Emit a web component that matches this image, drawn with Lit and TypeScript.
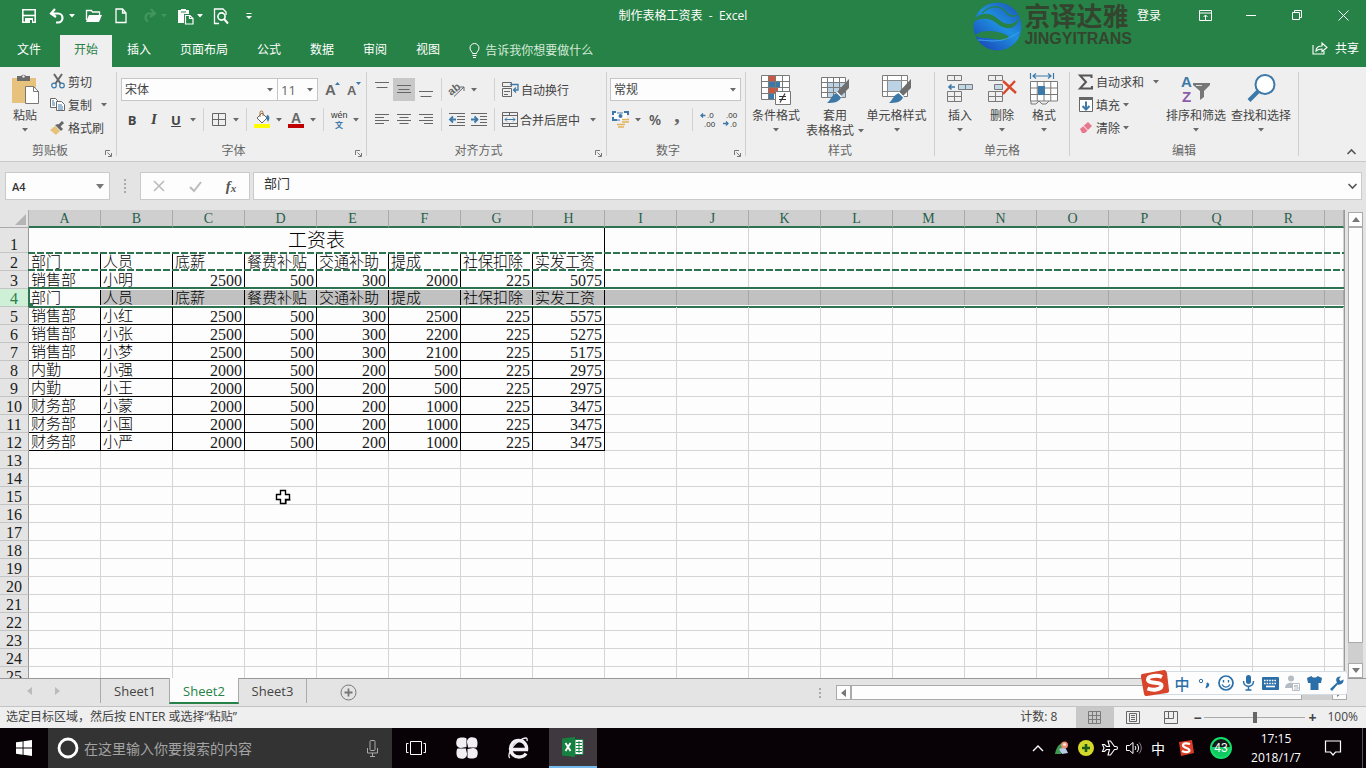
import { LitElement, html, svg, css, nothing, TemplateResult, SVGTemplateResult } from "lit";
import { customElement, state } from "lit/decorators.js";
import { classMap } from "lit/directives/class-map.js";

const icon = (w: number, h: number, body: SVGTemplateResult) =>
  html`<svg class="ic" width=${w} height=${h} viewBox="0 0 ${w} ${h}" fill="none" aria-hidden="true">${body}</svg>`;

const caret = html`<svg class="caret" width="6" height="4" viewBox="0 0 6 4" aria-hidden="true"><path d="M0 0h6L3 3.5z" fill="currentColor"/></svg>`;

const G = "#666";
const B = "#3c78a8";

const cellsGrid = (x: number, y: number, c: number, r: number, w: number, h: number) => {
  const lines: string[] = [];
  for (let i = 0; i <= c; i++) lines.push(`M${x + i * w} ${y}v${r * h}`);
  for (let j = 0; j <= r; j++) lines.push(`M${x} ${y + j * h}h${c * w}`);
  return svg`<path d=${lines.join("")} stroke="#7a7a7a"/>`;
};

const brush = svg`<path d="M29 6v9l-8 8-4-4z" fill="#6e6e6e"/><path d="M17 20l4 4c-1 5-7 6-14 6 4-3 4-8 10-10z" fill=${B}/><path d="M16.500 19l5 5" stroke="#fff" stroke-width="1.300"/>`;

const I = {
  save: icon(16, 16, svg`<path d="M1.800 1.800h12.400v12.400H1.800z" stroke="#fff" stroke-width="1.600"/><path d="M1 7.500h14" stroke="#fff" stroke-width="1.600"/><path d="M4 10h8v5H4z" fill="#fff"/><path d="M9 12h2v3H9z" fill="#268246"/>`),
  undo: icon(16, 16, svg`<path d="M6 1L2 5.5 7 9M2.5 5.5H9a4.5 4.5 0 010 9H7" stroke="#fff" stroke-width="2.2"/>`),
  redo: icon(16, 16, svg`<path d="M10 1l4 4.500L9 9M13.500 5.500H7a4.500 4.500 0 000 8" stroke="#439560" stroke-width="2.200"/>`),
  open: icon(17, 16, svg`<path d="M1.500 12V2.500h5l1 1.500h7v3" stroke="#fff" stroke-width="1.300"/><path d="M4 7h13l-3 7H1z" fill="#fff"/>`),
  fresh: icon(12, 16, svg`<path d="M1 1h6.500L11 5v9.500H1z M7.500 1v4H11" stroke="#fff" stroke-width="1.300"/>`),
  pasteW: icon(17, 17, svg`<path d="M1 2h3v-1h5v1h3v4H7v9H1z" fill="#fff"/><path d="M4 4h5" stroke="#268246"/><path d="M8.500 7.500h4.500l3 3v5.500H8.500z M12.500 7.500v3H16" fill="#268246" stroke="#fff" stroke-width="1.200"/>`),
  preview: icon(16, 17, svg`<path d="M13 7V4L10 1H1.500v14.500H6" stroke="#fff" stroke-width="1.300"/><circle cx="8.500" cy="8.500" r="3.600" stroke="#fff" stroke-width="1.600"/><path d="M11 11l4 4.500" stroke="#fff" stroke-width="2"/>`),
  more: icon(8, 8, svg`<path d="M1.500 1.500h5" stroke="#fff"/><path d="M1 4h6L4 7z" fill="#fff"/>`),
  ribbonOpt: icon(13, 11, svg`<path d="M.5 .5h12v10H.5zM.5 3h12M6.500 10V5M4.500 7l2-2 2 2" stroke="#fff"/>`),
  min: icon(10, 10, svg`<path d="M0 5.500h10" stroke="#fff"/>`),
  restore: icon(10, 10, svg`<path d="M.5 2.500h7v7h-7zM2.500 2.500v-2h7v7h-2" stroke="#fff"/>`),
  close: icon(11, 11, svg`<path d="M.5 .5l10 10M10.500 .5l-10 10" stroke="#fff"/>`),
  bulb: icon(11, 15, svg`<path d="M3.500 10.500C3.500 8.500 1 8 1 5a4.500 4.500 0 019 0c0 3-2.500 3.500-2.500 5.500zM3.500 12.500h4M4 14.500h3" stroke="#fff"/>`),
  share: icon(16, 14, svg`<path d="M1 4v9h11v-3M4 10c0-4 3-5 6-5V2l5 4.500-5 4V8C7 8 5.500 8.500 4 10z" stroke="#fff" stroke-width="1.100"/>`),
  paste: icon(30, 32, svg`<path d="M2 5h24v25H2z" fill="#e6c27c"/><path d="M7 3h4a3 3 0 015 0h4v5H7z" fill="#6b6b6b"/><circle cx="13.500" cy="3.500" r="1.200" fill="#eee"/><path d="M15.500 13.500h8l5 5v12h-13z" fill="#fff" stroke="#777"/><path d="M23.500 13.500v5h5" stroke="#777"/>`),
  cut: icon(14, 15, svg`<path d="M3 0l6.500 9.500M11 0L4.500 9.500" stroke="#666" stroke-width="2"/><circle cx="3" cy="11.500" r="2.300" stroke=${B} stroke-width="1.200"/><circle cx="11" cy="11.500" r="2.300" stroke=${B} stroke-width="1.200"/>`),
  copy: icon(15, 15, svg`<path d="M.5 1.500h5l2 2v7h-7z" fill="#fff" stroke=${G}/><path d="M6.500 4.500h5l3 3v6h-8z" fill="#fff" stroke=${G}/><path d="M2 4h2M2 6h3M2 8h3M8 8h4M8 10h5M8 12h5" stroke=${B}/>`),
  painter: icon(15, 14, svg`<path d="M0 9l5-4 5 5-4 4z" fill="#e6c27c"/><path d="M5 4l3-1 5 5-2 2z" fill="#666"/><path d="M9 5l4-4" stroke="#666" stroke-width="3"/>`),
  bigA: icon(16, 17, svg`<text x="0" y="14" font-family="Liberation Sans" font-size="15" font-weight="bold" fill="#666">A</text><path d="M10 4l2.500-3L15 4z" fill=${B}/>`),
  smallA: icon(16, 17, svg`<text x="0" y="14" font-family="Liberation Sans" font-size="13" font-weight="bold" fill="#666">A</text><path d="M9 1h5l-2.500 3z" fill=${B}/>`),
  borders: icon(14, 13, svg`<path d="M.5 .5h13v12H.5zM6.500 .5v12M.5 6.500h13" stroke=${G}/>`),
  fill: icon(18, 17, svg`<path d="M4 7l5-5 5 5-5 5z" fill="#fff" stroke="#666"/><path d="M7 6V1.500a1.500 1.500 0 013 0V5" stroke="#a8713a"/><path d="M14 4c3 0 3 4 1 7-1-2-1-3-2-4z" fill=${B}/><path d="M1 13h16v4H1z" fill="#ff0"/>`),
  color: icon(16, 17, svg`<text x="3" y="12" font-family="Liberation Sans" font-size="14" font-weight="bold" fill="#666">A</text><path d="M0 13h16v4H0z" fill="#c00000"/>`),
  wen: icon(18, 19, svg`<text x="1" y="8" font-family="Liberation Sans" font-weight="400" font-size="9" fill="#333">wén</text><text x="5" y="18" font-family="Noto Sans CJK SC" font-size="8" font-weight="700" fill=${B}>文</text>`),
  alTop: icon(14, 15, svg`<path d="M0 .5h14M1.500 5.500h11" stroke=${G}/>`),
  alMid: icon(14, 15, svg`<path d="M0 3.500h14M1.500 7.500h11M0 10.500h14" stroke=${G}/>`),
  alBot: icon(14, 15, svg`<path d="M0 9.500h14M1.500 14.500h11" stroke=${G}/>`),
  left: icon(14, 11, svg`<path d="M0 .5h14M0 3.500h9M0 6.500h14M0 9.500h9" stroke=${G}/>`),
  center: icon(14, 11, svg`<path d="M0 .5h14M2.500 3.500h9M0 6.500h14M2.500 9.500h9" stroke=${G}/>`),
  right: icon(14, 11, svg`<path d="M0 .5h14M5 3.500h9M0 6.500h14M5 9.500h9" stroke=${G}/>`),
  orient: icon(18, 17, svg`<text x="0" y="12" transform="rotate(-38 6 9)" font-family="Liberation Sans" font-size="11" font-weight="bold" fill="#666">ab</text><path d="M6 15.500L16 6M12 6h4v4" stroke="#666"/>`),
  outdent: icon(16, 13, svg`<path d="M0 .5h16M8 3.500h8M8 6.500h8M8 9.500h8M0 12.500h16" stroke=${G}/><path d="M7 6.500H1M4 3.500L1 6.500l3 3" stroke=${B} stroke-width="1.800"/>`),
  indent: icon(16, 13, svg`<path d="M0 .5h16M9 3.500h7M9 6.500h7M9 9.500h7M0 12.500h16" stroke=${G}/><path d="M0 6.500h6M3.500 3.500l3 3-3 3" stroke=${B} stroke-width="1.800"/>`),
  wrap: icon(17, 15, svg`<path d="M.5 .5h9v4h-9zM.5 6.500h9v8h-9zM2 9.500h6M2 12.500h4" stroke=${G}/><path d="M8 2.500h8v5.500h-4M14 5.500L11.500 8l2.500 2.500" stroke=${B} stroke-width="1.300"/>`),
  merge: icon(16, 15, svg`<path d="M.5 .5h15v14H.5zM.5 3.500h15M.5 11.500h15M7.500 .5v3M7.500 11.500v3" stroke=${G}/><path d="M3 7.500h10M5 5.500l-2 2 2 2M11 5.500l2 2-2 2" stroke=${B}/>`),
  money: icon(18, 17, svg`<path d="M2 2h13v7H2z" fill="#fff"/><path d="M1 4V1h3M12 1h4v3M1 6v3h4" stroke=${B} stroke-width="2"/><path d="M5 2h6M2 9h6" stroke=${B}/><circle cx="8.500" cy="5" r="2" fill=${B}/><path d="M10 8.500h7M10 11h7M5 13.500h8M6 16h6" stroke="#e3b35c" stroke-width="1.600"/>`),
  incDec: icon(16, 17, svg`<path d="M5.500 4.500H1M3 2.500l-2 2 2 2" stroke=${B} stroke-width="1.300"/><text x="7" y="7" font-family="Liberation Sans" font-weight="400" font-size="8" fill="#333">.0</text><text x="4" y="16" font-family="Liberation Sans" font-weight="400" font-size="8" fill="#333">.00</text>`),
  decDec: icon(16, 17, svg`<path d="M1 12.500h5M4 10.500l2 2-2 2" stroke=${B} stroke-width="1.300"/><text x="4" y="7" font-family="Liberation Sans" font-weight="400" font-size="8" fill="#333">.00</text><text x="8" y="16" font-family="Liberation Sans" font-weight="400" font-size="8" fill="#333">.0</text>`),
  cond: icon(30, 32, svg`<path d="M.5 2.500h28v24H.5z" fill="#fff"/><path d="M8 2h6v6H8zM8 15h9v6H8z" fill="#cf5540"/><path d="M8 9h11v5H8zM8 21h5v6H8z" fill=${B}/>${cellsGrid(0.5, 2.5, 4, 4, 7, 6)}<path d="M14.500 18.500h15v13h-15z" fill="#fff" stroke="#777"/><path d="M18 23.500h7M18 26.500h7M24 20.500l-5 9" stroke="#333" stroke-width="1.200"/>`),
  tableFmt: icon(30, 32, svg`<path d="M1.500 4.500h24v20h-24z" fill="#fff"/><path d="M7 9h18v15H7z" fill="#bcd3e6"/>${cellsGrid(1.5, 4.5, 4, 4, 6, 5)}${brush}`),
  cellFmt: icon(30, 32, svg`<path d="M.5 2.500h25v21H.5z" fill="#fff"/>${cellsGrid(0.5, 2.5, 1, 1, 25, 21)}<path d="M5.500 3v20M19.500 3v20M1 7.500h25M1 18.500h25" stroke="#8a8a8a"/><path d="M6 8h13v10H6z" fill="#bcd3e6"/>${brush}`),
  insert: icon(28, 32, svg`${cellsGrid(1.5, 2.5, 2, 1, 7, 5)}<path d="M12.500 11.500h14v5h-14z" fill="#c3d8e6"/>${cellsGrid(12.5, 11.5, 2, 1, 7, 5)}${cellsGrid(1.5, 18.5, 2, 2, 7, 5)}<path d="M9 14H3M5.500 11.500L3 14l2.500 2.500" stroke=${B} stroke-width="1.600"/>`),
  del: icon(30, 32, svg`${cellsGrid(1.5, 2.5, 2, 1, 7, 5)}<path d="M7.500 11.500h8v5h-8z" fill="#c3d8e6" stroke="#7a7a7a"/>${cellsGrid(1.5, 18.5, 2, 2, 7, 5)}<path d="M16 8l13 12M28 8L16 21" stroke="#d9492c" stroke-width="2.400"/>`),
  format: icon(28, 32, svg`<path d="M.5 0v6M23.500 0v6M3 3h18M6 .5L3 3l3 2.500M18 .5L21 3l-3 2.500" stroke=${B} stroke-width="1.200"/><path d="M.5 8.500h27v20H.5z" fill="#fff"/>${cellsGrid(0.5, 8.5, 4, 3, 6.75, 6.5)}<path d="M8 13h7v9H8z" fill=${B}/><path d="M1 28v3h5l3-3 3 3h4l3-3" stroke="#777"/>`),
  sum: icon(15, 16, svg`<path d="M13.500 4V1.500H2L8 8l-6 6.500h12V12" stroke="#555" stroke-width="2"/>`),
  down: icon(14, 15, svg`<path d="M.5 .5h13v14H.5z" fill="#fff" stroke=${G}/><path d="M0 0h14v3H0z" fill=${G}/><path d="M7 4.500v8M3.500 9L7 12.500 10.500 9" stroke=${B} stroke-width="2"/>`),
  eraser: icon(14, 13, svg`<path d="M1 8l8-7 4 4-7 7H3z" fill="#e8788c"/><path d="M4.500 5l4.500 4.500" stroke="#fff"/>`),
  sort: icon(30, 32, svg`<text x="0" y="14" font-family="Liberation Sans" font-size="15" font-weight="bold" fill=${B}>A</text><text x="1" y="29" font-family="Liberation Sans" font-size="15" font-weight="bold" fill="#8d5aa8">Z</text><path d="M12 10h17v2l-6 6v6l-4 3v-9l-7-6z" fill="#777"/><path d="M15 12.500h6" stroke="#ddd"/>`),
  find: icon(30, 32, svg`<circle cx="19" cy="11.500" r="9.500" fill="#fff" stroke=${B} stroke-width="2"/><path d="M12 18.500L3 27.500" stroke=${B} stroke-width="4"/>`),
  launcher: icon(7, 7, svg`<path d="M.5 5V.5H5" stroke="#777"/><path d="M2.500 2.500L6 6" stroke="#777"/><path d="M6.500 3v3.500H3" stroke="#777"/>`),
  up: icon(9, 6, svg`<path d="M.5 5l4-4 4 4" stroke="#555" stroke-width="1.600"/>`),
  x: icon(12, 12, svg`<path d="M1 1l10 10M11 1L1 11" stroke="#bbb" stroke-width="1.600"/>`),
  check: icon(13, 11, svg`<path d="M1 6l4 4 7-9" stroke="#bbb" stroke-width="2"/>`),
  chev: icon(9, 6, svg`<path d="M.5 1l4 4 4-4" stroke="#555" stroke-width="1.600"/>`),
  plus: icon(17, 17, svg`<circle cx="8.500" cy="8.500" r="7.500" stroke="#777"/><path d="M8.500 4.500v8M4.500 8.500h8" stroke="#777" stroke-width="1.800"/>`),
  triU: icon(8, 5, svg`<path d="M0 5h8L4 0z" fill="#777"/>`),
  triD: icon(8, 5, svg`<path d="M0 0h8L4 5z" fill="#777"/>`),
  triL: icon(5, 8, svg`<path d="M5 0v8L0 4z" fill="currentColor"/>`),
  triR: icon(5, 8, svg`<path d="M0 0v8l5-4z" fill="currentColor"/>`),
  vNormal: icon(14, 13, svg`${cellsGrid(0.5, 0.5, 3, 3, 4, 4)}`),
  vPage: icon(14, 13, svg`<path d="M.5 .5h13v12H.5zM3.500 2.500h7v8h-7zM5 4.500h4M5 6.500h4M5 8.500h4" stroke=${G}/>`),
  vBreak: icon(14, 13, svg`<path d="M.5 .5h13v12H.5zM4.500 .5v7M9.500 .5v7M.500 7.500h9" stroke=${G}/>`),
  win: icon(16, 16, svg`<path d="M0 2.300L6.600 1.400v6.200H0zM7.500 1.300L16 0v7.600H7.500zM0 8.500h6.600v6.200L0 13.800zM7.500 8.500H16V16l-8.500-1.200z" fill="#fff"/>`),
  cortana: icon(22, 22, svg`<circle cx="11" cy="11" r="9" stroke="#fff" stroke-width="2.800"/>`),
  mic: icon(11, 17, svg`<rect x="3" y=".5" width="5" height="10" rx="1" stroke="#aaa"/><path d="M.5 8v5h10V8M5.500 13v3.500M3 16.500h5" stroke="#aaa"/>`),
  task: icon(20, 14, svg`<path d="M4.500 .5h11v13h-11zM2.500 2.500H.5v9h2M17.500 2.500h2v9h-2" stroke="#fff"/>`),
  knot: icon(22, 22, svg`<g fill="#f2eff4"><path d="M10.500 10V1.500C9 0 2 0 1 2.500-1 7 1 11 5 11c2 0 3-1 5.500-1z"/><path d="M12 10.500h8.500C22 9 22 2 19.500 1 15 -1 11 1 11 5c0 2 1 3 1 5.500z"/><path d="M11.500 12v8.500c1.500 1.500 8.500 1.500 9.500-1 2-4.500 0-8.500-4-8.500-2 0-3 1-5.500 1z"/><path d="M10 11.500H1.500C0 13 0 20 2.500 21c4.500 2 8.500 0 8.500-4 0-2-1-3-1-5.500z"/></g>`),
  edge: icon(22, 22, svg`<path d="M4.500 12.500h15c.5-5-3-9-8-9s-8 4-8 8.500 4 8 8.500 8c3 0 5.500-1 7-3.500" stroke="#f2eff4" stroke-width="3.400"/><path d="M3 21C0 20 3 10 12 4 18 0 21 0 20 4" stroke="#f2eff4" stroke-width="1.300"/>`),
  excel: icon(22, 20, svg`<path d="M0 1.500L13 0v20L0 18.500z" fill="#15803f"/><path d="M13 2.500h8v15h-8z" fill="#fff" stroke="#15803f"/><path d="M14 5.500h6M14 8.500h6M14 11.500h6M14 14.500h6M17 4v12" stroke="#15803f"/><path d="M3.500 6l5 8M8.500 6l-5 8" stroke="#fff" stroke-width="1.900"/>`),
  trayUp: icon(12, 7, svg`<path d="M1 6l5-5 5 5" stroke="#fff" stroke-width="1.400"/>`),
  tray1: icon(14, 14, svg`<path d="M0 13C1 7 4 2 8 2L6 13z" fill="#3f9a4e"/><path d="M4 8l6-2 3 6-6 1z" fill="#b9cbe8"/><circle cx="9.500" cy="4" r="3.500" fill="#e98c72"/><circle cx="9.500" cy="3.500" r="1.600" fill="#fbe3d8"/>`),
  tray2: icon(16, 16, svg`<circle cx="8" cy="8" r="8" fill="#d3d92b"/><path d="M1 5a8 8 0 0014 7A8 8 0 011 5z" fill="#7bbf2c"/><path d="M8 4v8M4 8h8" stroke="#1c5a1a" stroke-width="2.600"/>`),
  plane: icon(16, 16, svg`<path d="M.5 4.500h2l2 2h3L6 1h2.500l4 5.500h1.500c2 0 2 3 0 3h-1.500l-4 5.500H6l1.500-5.500h-3l-2 2h-2L2 8z" stroke="#fff" stroke-width="1.100"/>`),
  sound: icon(16, 14, svg`<path d="M.5 4.500h3L7 1.500v11L3.500 9.500h-3zM9 5c1 1 1 3 0 4M11 3c2 2 2 6 0 8" stroke="#fff"/><path d="M13 1.500c3 3 3 8 0 11" stroke="#888"/>`),
  trayS: icon(16, 16, svg`<path d="M1 2l13-2 2 13-13 3z" fill="#dc3e26"/><path d="M12 4c-3-1-7-1-7 1.500S12 8 11.500 10.500 6 12 4 11" stroke="#fff" stroke-width="2.200"/>`),
  note: icon(16, 16, svg`<path d="M.5 1h15v11h-5l-2.500 3-2.500-3h-5z" stroke="#fff" stroke-width="1.200"/>`),
  sogou: icon(30, 28, svg`<path d="M2 5l22-4c2 0 2 1 3 3l2 17c0 2 0 2-2 3L7 27c-2 0-2 0-3-2L1 8c0-2 0-2 1-3z" fill="#d8452b"/><path d="M22 8c-4-2-14-1.500-14 2.500 0 5 14 1.500 13.500 6.500-.5 4-9 4.500-14 2.500" stroke="#fff" stroke-width="4"/>`),
  imeDot: icon(12, 12, svg`<circle cx="3" cy="4" r="1.700" stroke="#2b6fa8"/><path d="M9 6c3 0 2 4-1 5l1-3z" fill="#2b6fa8" stroke="#2b6fa8"/>`),
  smile: icon(16, 16, svg`<circle cx="8" cy="8" r="7" stroke="#2b6fa8" stroke-width="1.700"/><path d="M5.500 5v2.500M10.500 5v2.500M4 9.500c2 3.500 6 3.500 8 0" stroke="#2b6fa8" stroke-width="1.400"/>`),
  imeMic: icon(13, 16, svg`<rect x="4" y="0" width="5" height="9" rx="2.500" fill="#2b6fa8"/><path d="M1.500 6c0 7 10 7 10 0M6.500 11v4M3.500 15h6" stroke="#2b6fa8" stroke-width="1.500"/>`),
  kbd: icon(17, 13, svg`<rect width="17" height="13" rx="1" fill="#2b6fa8"/><path d="M2 3.500h13M2 6.500h13" stroke="#fff" stroke-width="1.600" stroke-dasharray="1.600 1"/><path d="M4 9.500h9" stroke="#fff" stroke-width="1.600"/>`),
  person: icon(15, 16, svg`<circle cx="6" cy="3.500" r="3" fill="#b5bcc4"/><path d="M0 13c0-7 12-7 12 0z" fill="#b5bcc4"/><path d="M7.500 8.500h7v7h-7z" fill="#fff" stroke="#b5bcc4"/><path d="M13 10.500H9.500V12H13v2H9" stroke="#b5bcc4"/>`),
  shirt: icon(15, 14, svg`<path d="M0 2l4.500-2c1 2 5 2 6 0L15 2l-1 5h-2.500v7h-8V7H1z" fill="#2b6fa8"/>`),
  wrench: icon(15, 15, svg`<path d="M1 13l7-6.500C6 3 8 0 12 .5L10 3l1.500 2L14.500 3.500C15 7 12 9.500 8.500 8.500L3 15z" fill="#2b6fa8"/>`),
  cursor: icon(16, 16, svg`<path d="M5.500 1.500h5v4h4v5h-4v4h-5v-4h-4v-5h4z" fill="#fff" stroke="#000" stroke-width="1.400"/><path d="M11 15V11h4.500" stroke="#000"/>`),
};

const COLS = "ABCDEFGHIJKLMNOPQR".split("");
const HEAD = ["部门", "人员", "底薪", "餐费补贴", "交通补助", "提成", "社保扣除", "实发工资"];
const DATA: Record<number, (string | number)[]> = {
  2: HEAD,
  3: ["销售部", "小明", 2500, 500, 300, 2000, 225, 5075],
  4: HEAD,
  5: ["销售部", "小红", 2500, 500, 300, 2500, 225, 5575],
  6: ["销售部", "小张", 2500, 500, 300, 2200, 225, 5275],
  7: ["销售部", "小梦", 2500, 500, 300, 2100, 225, 5175],
  8: ["内勤", "小强", 2000, 500, 200, 500, 225, 2975],
  9: ["内勤", "小王", 2000, 500, 200, 500, 225, 2975],
  10: ["财务部", "小蒙", 2000, 500, 200, 1000, 225, 3475],
  11: ["财务部", "小国", 2000, 500, 200, 1000, 225, 3475],
  12: ["财务部", "小严", 2000, 500, 200, 1000, 225, 3475],
};

const base = css`
  * { box-sizing: border-box; }
  button, input, select {
    font: inherit; color: inherit; background: none; border: 0; padding: 0; margin: 0; border-radius: 0; outline: none;
  }
  button { display: flex; align-items: center; justify-content: center; flex: none; white-space: nowrap; }
  .ic, .caret { display: block; flex: none; overflow: visible; }
`;

@customElement("title-bar")
export class TitleBar extends LitElement {
  static styles = [base, css`
    :host { display: block; background: #268246; color: #fff; position: relative; }
    .row { display: grid; grid-template-columns: 1fr auto 1fr; height: 32px; align-items: center; }
    .qat { display: flex; gap: 6px; padding-left: 18px; align-items: center; }
    .qat button { width: 22px; height: 22px; }
    .pair { display: flex; }
    .qat .drop { width: 8px; }
    .off { color: #439560; }
    .title { line-height: 30px; white-space: pre; }
    .win { display: flex; justify-content: flex-end; height: 32px; }
    .win button { width: 46px; height: 30px; }
    .win .login { width: 24px; margin-right: 21px; }
    nav { display: flex; gap: 1px; margin-top: 3px; height: 32px; align-items: stretch; }
    nav a { color: #fff; text-decoration: none; padding: 0 14px; line-height: 30px; }
    nav .file { padding: 0 18px 0 17px; }
    nav .on { background: #efefef; color: #268246; }
    .tell { display: flex; align-items: center; gap: 5px; margin-left: 14px; flex: 1; padding-bottom: 2px; }
    .tell input { width: 160px; }
    .tell input::placeholder { color: #d5ead9; opacity: 1; }
    .share { gap: 7px; padding: 0 7px 6px 0; }
    .mark { position: absolute; right: 234px; top: 2px; display: flex; gap: 2px; color: #34452f; pointer-events: none; }
    .mark div { display: flex; flex-direction: column; }
    .mark b { font-size: 26px; line-height: 28px; font-weight: 700; }
    .mark strong { font: 700 16px/18px "Liberation Sans", Arial, sans-serif; }
  `];
  render() {
    const tabs = ["插入", "页面布局", "公式", "数据", "审阅", "视图"];
    return html`
      <div class="row">
        <div class="qat">
          <button aria-label="保存">${I.save}</button>
          <span class="pair"><button aria-label="撤消">${I.undo}</button><button class="drop" aria-label="撤消列表">${caret}</button></span>
          <button aria-label="打开">${I.open}</button>
          <button aria-label="新建">${I.fresh}</button>
          <span class="pair off"><button aria-label="恢复">${I.redo}</button><button class="drop" aria-label="恢复列表">${caret}</button></span>
          <span class="pair"><button aria-label="粘贴">${I.pasteW}</button><button class="drop" aria-label="粘贴选项">${caret}</button></span>
          <button aria-label="打印预览">${I.preview}</button>
          <button aria-label="自定义快速访问工具栏">${I.more}</button>
        </div>
        <div class="title">制作表格工资表  -  Excel</div>
        <div class="win">
          <button class="login">登录</button>
          <button aria-label="功能区显示选项">${I.ribbonOpt}</button>
          <button aria-label="最小化">${I.min}</button>
          <button aria-label="还原">${I.restore}</button>
          <button aria-label="关闭">${I.close}</button>
        </div>
      </div>
      <nav>
        <a class="file" href="#file">文件</a>
        <a class="on" href="#home">开始</a>
        ${tabs.map((t) => html`<a href="#${t}">${t}</a>`)}
        <label class="tell">${I.bulb}<input placeholder="告诉我你想要做什么" aria-label="告诉我你想要做什么" /></label>
        <button class="share">${I.share}共享</button>
      </nav>
      <div class="mark">
        <svg width="49" height="49" viewBox="0 0 49 49" aria-hidden="true">
          <defs><linearGradient id="g" x1="1" y1="0" x2="0.2" y2="1"><stop offset="0" stop-color="#1a4fb0"/><stop offset=".5" stop-color="#1f8fe0"/><stop offset="1" stop-color="#1a49b8"/></linearGradient></defs>
          <circle cx="24.500" cy="24.500" r="24" fill="url(#g)"/>
          <path d="M0 18c6-7 14-8 21-4 6 4 9 8 15 8 4 0 7-2 10-6-2 8-7 11-13 10-8-1-10-8-18-9-5-1-10 0-15 3z" fill="#268246"/>
          <path d="M9 11C17 3 27 3 33 10c3 4 7 5 11 3" stroke="#268246" fill="none" stroke-width="1.300"/>
          <path d="M1 33c4-1 7-4 13-4 8 0 17 2 21 5 2 3-1 4-4 4-8 0-13-2-19-2-5 0-8-1-11-3z" fill="#268246"/>
          <path d="M5 38c11 0 23 5 41-8" stroke="#3fa0ee" fill="none"/>
        </svg>
        <div><b>京译达雅</b><strong>JINGYITRANS</strong></div>
      </div>`;
  }
}

@customElement("ribbon-bar")
export class RibbonBar extends LitElement {
  static styles = [base, css`
    :host { display: flex; background: #efefef; border-bottom: 1px solid #c9c9c9; color: #444; height: 95px; overflow: hidden; }
    .caret { color: #6a6a6a; }
    .group { display: flex; flex-direction: column; flex: none; }
    .body { display: flex; height: 73px; }
    .name { display: flex; height: 20px; align-items: center; color: #666; }
    .name span { flex: 1; text-align: center; }
    .name button { width: 16px; height: 16px; margin-top: 6px; }
    .end { width: 1px; background: #d0d0d0; margin: 5px 0; flex: none; }
    .big { flex-direction: column; justify-content: flex-start; padding-top: 6px; line-height: 15px; }
    .big .txt { margin-top: 3px; }
    .big .dd { display: flex; height: 14px; align-items: center; }
    .big .line { display: flex; gap: 4px; align-items: center; }
    .list { display: flex; flex-direction: column; padding-top: 3px; }
    .lead { padding-right: 3px; }
    .item { height: 23px; justify-content: flex-start; gap: 3px; }
    .item .slot { width: 15px; display: flex; justify-content: center; }
    .item .far { display: flex; margin-left: 6px; }
    .rows { display: flex; flex-direction: column; gap: 7px; padding-top: 11px; }
    .r { display: flex; align-items: center; height: 23px; }
    .b { width: 22px; height: 23px; font: 700 13px "Open Sans", sans-serif; }
    .a { width: 12px; height: 23px; }
    .on { background: #c8c8c8; }
    .u { text-decoration: underline; }
    .i { font-style: italic; font-family: "Liberation Serif", serif; font-size: 15px; }
    .pct { font: 600 14px "Open Sans", sans-serif; color: #555; }
    .com { font: 700 22px/10px "Liberation Serif", serif; padding-bottom: 10px; color: #666; }
    .s { width: 1px; height: 23px; background: #d2d2d2; margin: 0 4px; }
    .s.far { margin-left: 14px; }
    .combo { display: grid; align-items: center; border: 1px solid #c6c6c6; background: #fdfdfd; height: 23px; }
    .combo + .combo { border-left: 0; margin-right: 4px; }
    .combo select { grid-area: 1 / 1; appearance: none; width: 100%; height: 21px; padding-left: 3px; }
    .combo .caret { grid-area: 1 / 1; justify-self: end; margin-right: 4px; pointer-events: none; }
    .num select { font-size: 13px; color: #666; }
    .w157 { width: 157px; } .w40 { width: 40px; } .w131 { width: 131px; }
    .clip { width: 116px; } .font { width: 249px; } .align { width: 239px; } .number { width: 138px; }
    .style { width: 188px; } .cells { width: 134px; } .edit { width: 228px; }
    .p3 { padding-left: 3px; } .p4 { padding-left: 4px; } .p8 { padding-left: 8px; }
    .k42 { width: 42px; } .k58 { width: 58px; } .k65 { width: 65px; } .k60 { width: 60px; }
    .wide { height: 23px; gap: 2px; padding-left: 3px; }
    .wide .caret { margin-left: 8px; }
    .fold { margin-left: auto; align-self: flex-end; width: 30px; height: 18px; }
  `];
  private big(cls: string, ic: TemplateResult, text: string, second?: string) {
    return html`<button class="big ${cls}">${ic}<span class="txt">${text}</span>
      ${second ? html`<span class="line">${second}${caret}</span>` : html`<span class="dd">${caret}</span>`}</button>`;
  }
  private item(ic: TemplateResult, text: string, dd: unknown = nothing) {
    return html`<button class="item"><span class="slot">${ic}</span>${text}${dd}</button>`;
  }
  private name(text: string, launch = true) {
    return html`<div class="name"><span>${text}</span>${launch ? html`<button aria-label="${text}设置">${I.launcher}</button>` : nothing}</div>`;
  }
  private b(label: string, content: unknown, cls = "") {
    return html`<button class="b ${cls}" aria-label=${label}>${content}</button>`;
  }
  private a(label: string) {
    return html`<button class="a" aria-label="${label}选项">${caret}</button>`;
  }
  private combo(label: string, value: string, cls: string) {
    return html`<label class="combo ${cls}"><select aria-label=${label}><option>${value}</option></select>${caret}</label>`;
  }
  render() {
    const s = html`<i class="s"></i>`;
    const far = html`<span class="far">${caret}</span>`;
    return html`
      <section class="group clip">
        <div class="body">${this.big("k42 p8", I.paste, "粘贴")}
          <div class="list p8">${this.item(I.cut, "剪切")}${this.item(I.copy, "复制", far)}${this.item(I.painter, "格式刷")}</div>
        </div>${this.name("剪贴板")}
      </section><i class="end"></i>
      <section class="group font">
        <div class="body"><div class="rows p4">
          <div class="r">${this.combo("字体", "宋体", "w157")}${this.combo("字号", "11", "w40 num")}${this.b("增大字号", I.bigA)}${this.b("减小字号", I.smallA)}</div>
          <div class="r">${this.b("加粗", "B")}${this.b("倾斜", "I", "i")}${this.b("下划线", "U", "u")}${this.a("下划线")}${s}
            ${this.b("边框", I.borders)}${this.a("边框")}${s}${this.b("填充颜色", I.fill)}${this.a("填充颜色")}${this.b("字体颜色", I.color)}${this.a("字体颜色")}${s}${this.b("拼音", I.wen)}${this.a("拼音")}</div>
        </div></div>${this.name("字体")}
      </section><i class="end"></i>
      <section class="group align">
        <div class="body"><div class="rows p4">
          <div class="r">${this.b("顶端对齐", I.alTop)}${this.b("垂直居中", I.alMid, "on")}${this.b("底端对齐", I.alBot)}${s}${this.b("方向", I.orient)}${this.a("方向")}<i class="s far"></i><button class="wide">${I.wrap}自动换行</button></div>
          <div class="r">${this.b("左对齐", I.left)}${this.b("居中", I.center)}${this.b("右对齐", I.right)}${s}${this.b("减少缩进量", I.outdent)}${this.b("增加缩进量", I.indent)}${s}<button class="wide">${I.merge}合并后居中${caret}</button></div>
        </div></div>${this.name("对齐方式")}
      </section><i class="end"></i>
      <section class="group number">
        <div class="body"><div class="rows p3">
          <div class="r">${this.combo("数字格式", "常规", "w131")}</div>
          <div class="r">${this.b("会计数字格式", I.money)}${this.a("会计数字格式")}${this.b("百分比样式", "%", "pct")}${this.b("千位分隔样式", ",", "com")}${s}${this.b("增加小数位数", I.incDec)}${this.b("减少小数位数", I.decDec)}</div>
        </div></div>${this.name("数字")}
      </section><i class="end"></i>
      <section class="group style">
        <div class="body">${this.big("k60", I.cond, "条件格式")}${this.big("k58", I.tableFmt, "套用", "表格格式")}${this.big("k65", I.cellFmt, "单元格样式")}</div>${this.name("样式", false)}
      </section><i class="end"></i>
      <section class="group cells">
        <div class="body p4">${this.big("k42", I.insert, "插入")}${this.big("k42", I.del, "删除")}${this.big("k42", I.format, "格式")}</div>${this.name("单元格", false)}
      </section><i class="end"></i>
      <section class="group edit">
        <div class="body p8"><div class="list lead">${this.item(I.sum, "自动求和", far)}${this.item(I.down, "填充", caret)}${this.item(I.eraser, "清除", caret)}</div>
          ${this.big("k65 p3", I.sort, "排序和筛选")}${this.big("k65 p3", I.find, "查找和选择")}</div>${this.name("编辑", false)}
      </section><i class="end"></i>
      <button class="fold" aria-label="折叠功能区">${I.up}</button>`;
  }
}

@customElement("formula-bar")
export class FormulaBar extends LitElement {
  static styles = [base, css`
    :host { display: flex; background: #e4e4e4; padding: 10px 4px 10px 5px; color: #333; }
    .box { display: flex; align-items: center; height: 28px; background: #fdfdfd; border: 1px solid #cacaca; }
    .cell { width: 105px; padding-right: 5px; color: #777; }
    .cell input { flex: 1; min-width: 0; padding-left: 6px; color: #333; font: 600 11px "Open Sans", sans-serif; }
    .dots { width: 30px; display: flex; align-items: center; justify-content: center; }
    .tools { width: 110px; justify-content: space-around; }
    .tools button { width: 34px; height: 26px; }
    .fx { font: italic 700 15px "Liberation Serif", serif; color: #555; }
    .fx sub { font-size: 11px; vertical-align: -1px; }
    .val { flex: 1; margin-left: 3px; padding: 0 4px 0 10px; }
    .val input { flex: 1; font-size: 13px; padding-bottom: 6px; line-height: 18px; }
  `];
  render() {
    return html`
      <label class="box cell"><input aria-label="名称框" .value=${"A4"} />${I.triD}</label>
      <span class="dots"><svg width="2" height="14" viewBox="0 0 2 14"><path d="M0 1h2M0 5h2M0 9h2M0 13h2" stroke="#aaa" stroke-width="2"/></svg></span>
      <div class="box tools"><button aria-label="取消">${I.x}</button><button aria-label="输入">${I.check}</button><button class="fx" aria-label="插入函数"><span>f<sub>x</sub></span></button></div>
      <label class="box val"><input aria-label="编辑栏" .value=${"部门"} />${I.chev}</label>`;
  }
}

@customElement("sheet-grid")
export class SheetGrid extends LitElement {
  static styles = [base, css`
    :host { display: flex; flex: 1; min-height: 0; background: #e4e4e4; position: relative; }
    .view { flex: 1; min-width: 0; overflow: hidden; background: #fdfdfd; border-right: 1px solid #9a9a9a; margin-right: 3px; position: relative; }
    table { width: 100%; table-layout: fixed; border-collapse: separate; border-spacing: 0; font: 16px/15px "Liberation Serif", "Noto Sans CJK SC", serif; color: #1c1c1c; }
    .c0 { width: 29px; } .c { width: 72px; }
    th { font-weight: 400; padding: 2px 0 0; }
    thead th { height: 18px; background: #cfcfcf; color: #28604a; font-size: 14px; line-height: 14px; border-right: 1px solid #aaa; border-bottom: 2px solid #2d7350; }
    thead .corner { background: #e4e4e4; border-bottom: 1px solid #aaa; }
    .corner svg { margin-left: 15px; display: block; }
    tr { height: 18px; }
    tbody tr { position: relative; }
    tbody th { background: #e4e4e4; border-right: 1px solid #999; border-bottom: 1px solid #c4c4c4; vertical-align: bottom; }
    td { padding: 2px 2px 0; border-right: 1px solid #d4d4d4; border-bottom: 1px solid #d4d4d4; white-space: nowrap; }
    .t { font-size: 15px; line-height: 15px; padding: 0 2px 2px; font-family: "Noto Sans CJK SC", sans-serif; font-weight: 300; color: #000; }
    .n { text-align: right; }
    .k { border-right-color: #000; border-bottom-color: #000; }
    .first { height: 25px; }
    .head { text-align: center; font: 300 19px/22px "Noto Sans CJK SC", sans-serif; padding: 0 0 2px; color: #000; }
    .sel td { background: #c1c1c1; }
    .sel td:not(.k) { border-right-color: #a6a6a6; }
    .sel td.act { background: #fdfdfd; }
    .sel th { background: #cdf0d7; color: #28804a; }
    .ants, .pick { position: absolute; left: 28px; right: 0; pointer-events: none; }
    .ants { top: -1px; bottom: 0; }
    .ants::before, .ants::after { content: ""; position: absolute; left: 0; right: 0; height: 2px; background: repeating-linear-gradient(90deg, #2d7350 0 7px, #fdfdfd 7px 9px); }
    .ants::before { top: 0; }
    .ants::after { bottom: 0; }
    .pick { top: -2px; bottom: -1px; border: solid #2d7350; border-width: 2px 0 2px 2px; box-shadow: inset 0 1px #fdfdfd, inset 0 -1px #fdfdfd; }
    .pick::after { content: ""; position: absolute; left: -2px; bottom: -2px; width: 5px; height: 5px; background: #2d7350; }
    .bar { width: 15px; margin: 2px 3px 0 0; display: flex; flex-direction: column; background: #cfcfcf; }
    .bar button { width: 15px; height: 15px; background: #fdfdfd; border: 1px solid #aaa; }
    .thumb { flex: 1; background: #fdfdfd; border: 1px solid #aaa; margin-bottom: 20px; }
    .pointer { position: absolute; left: 275px; top: 279px; }
  `];
  private row(r: number) {
    const vals = DATA[r] ?? [];
    return html`<tr class=${classMap({ sel: r === 4 })}>
      <th scope="row">${r}${r === 2 ? html`<i class="ants"></i>` : r === 4 ? html`<i class="pick"></i>` : nothing}</th>
      ${COLS.map((_, i) => {
        const v = vals[i];
        return html`<td class=${classMap({ k: v !== undefined, t: typeof v === "string", n: typeof v === "number", act: r === 4 && i === 0 })}>${v}</td>`;
      })}<td></td></tr>`;
  }
  render() {
    const rows = Array.from({ length: 24 }, (_, i) => i + 2);
    return html`
      <div class="view"><table>
        <colgroup><col class="c0" />${COLS.map(() => html`<col class="c" />`)}<col /></colgroup>
        <thead><tr><th class="corner"><svg width="11" height="11" viewBox="0 0 11 11"><path d="M11 0v11H0z" fill="#b4b4b4"/></svg></th>${COLS.map((c) => html`<th scope="col">${c}</th>`)}<th></th></tr></thead>
        <tbody>
          <tr class="first"><th scope="row">1</th><td class="k head" colspan="8">工资表</td>${COLS.slice(8).map(() => html`<td></td>`)}<td></td></tr>
          ${rows.map((r) => this.row(r))}
        </tbody></table></div>
      <div class="bar"><button aria-label="向上滚动">${I.triU}</button><div class="thumb"></div><button aria-label="向下滚动">${I.triD}</button></div>
      <span class="pointer">${I.cursor}</span>`;
  }
}

@customElement("sheet-footer")
export class SheetFooter extends LitElement {
  @state() private zoom = 50;
  static styles = [base, css`
    :host { display: block; color: #444; }
    .tabs { display: flex; height: 28px; background: #e4e4e4; border-top: 1px solid #999; font: 13px "Open Sans", sans-serif; position: relative; }
    .nav { width: 28px; color: #bbb; }
    .lead { display: flex; width: 101px; padding-left: 15px; border-right: 1px solid #aaa; margin-bottom: 3px; }
    .tab { width: 68px; height: 24px; }
    .tab.on { width: 70px; background: #fdfdfd; color: #268246; border: solid #aaa; border-width: 0 1px; border-bottom: 2px solid #268246; margin-top: -1px; height: 26px; padding-top: 2px; }
    .last { border-right: 1px solid #aaa; }
    .add { width: 82px; height: 26px; }
    .dots { margin-left: auto; display: flex; align-items: center; }
    .hbar { display: flex; width: 511px; margin: 6px 19px 6px 15px; background: #cfcfcf; }
    .hbar button { width: 15px; height: 15px; background: #fdfdfd; border: 1px solid #aaa; color: #777; }
    .thumb { flex: 1; margin-right: 30px; background: #fdfdfd; border: 1px solid #aaa; height: 15px; }
    .status { display: flex; align-items: center; height: 22px; background: #efefef; border-top: 1px solid #c3c3c3; padding: 0 8px 0 6px; }
    .msg { flex: 1; }
    .msg, .count, .pct { line-height: 17px; padding-bottom: 3px; }
    .status button { width: 38px; height: 21px; }
    .status .on { background: #c8c8c8; }
    .count { margin-right: 19px; }
    .status .pm { width: 14px; font: 700 14px "Open Sans", sans-serif; }
    input { appearance: none; width: 101px; height: 20px; background: linear-gradient(#aaa, #aaa) center / 100% 1px no-repeat; }
    input::-webkit-slider-thumb { appearance: none; width: 4px; height: 11px; background: #666; border-radius: 0; }
    .pct { margin-left: 8px; }
  `];
  render() {
    return html`
      <div class="tabs">
        <div class="lead"><button class="nav" aria-label="上一个">${I.triL}</button><button class="nav" aria-label="下一个">${I.triR}</button></div>
        <button class="tab">Sheet1</button><button class="tab on">Sheet2</button><button class="tab last">Sheet3</button>
        <button class="add" aria-label="新工作表">${I.plus}</button>
        <span class="dots"><svg width="2" height="10" viewBox="0 0 2 10"><path d="M0 1h2M0 5h2M0 9h2" stroke="#aaa" stroke-width="2"/></svg></span>
        <div class="hbar"><button aria-label="向左滚动">${I.triL}</button><div class="thumb"></div><button aria-label="向右滚动">${I.triR}</button></div>
      </div>
      <div class="status">
        <span class="msg">选定目标区域，然后按 ENTER 或选择“粘贴”</span>
        <span class="count">计数: 8</span>
        <button class="on" aria-label="普通">${I.vNormal}</button><button aria-label="页面布局">${I.vPage}</button><button aria-label="分页预览">${I.vBreak}</button>
        <button class="pm" aria-label="缩小">−</button>
        <input type="range" min="0" max="100" aria-label="缩放" .value=${String(this.zoom)} @input=${(e: Event) => (this.zoom = Number((e.target as HTMLInputElement).value))} />
        <button class="pm" aria-label="放大">+</button>
        <span class="pct">100%</span>
      </div>`;
  }
}

@customElement("task-bar")
export class TaskBar extends LitElement {
  static styles = [base, css`
    :host { display: flex; height: 40px; background: #080207; color: #fff; }
    .start { width: 48px; }
    .search { display: flex; align-items: center; width: 344px; background: #333; padding: 0 14px 0 9px; gap: 5px; }
    .search input { flex: 1; min-width: 0; font-size: 14px; }
    .search input::placeholder { color: #a3a3a3; opacity: 1; }
    .apps { display: flex; gap: 3px; flex: 1; }
    .apps button { width: 48px; height: 40px; }
    .apps .on { margin-left: 4px; background: #40383f; border-bottom: 2px solid #76b9ed; }
    .tray { display: flex; }
    .tray button { width: 24px; }
    .tray .s { width: 32px; }
    .tray .ball { width: 38px; }
    .tray .zh { font-size: 14px; }
    .ball span { width: 22px; height: 22px; border-radius: 11px; border: 2px solid #12e06a; background: linear-gradient(#141a17 45%, #12c860 45%); font: 12px/18px "Liberation Sans", sans-serif; }
    .tray .clock { width: 72px; flex-direction: column; line-height: 19px; }
    .tray .note { width: 42px; }
    .tray .desk { width: 4px; margin-left: 8px; border-left: 1px solid #555; }
  `];
  render() {
    return html`
      <button class="start" aria-label="开始">${I.win}</button>
      <label class="search">${I.cortana}<input placeholder="在这里输入你要搜索的内容" aria-label="搜索" />${I.mic}</label>
      <div class="apps"><button aria-label="任务视图">${I.task}</button><button aria-label="浏览器">${I.knot}</button><button aria-label="Internet Explorer">${I.edge}</button><button class="on" aria-label="Excel">${I.excel}</button></div>
      <div class="tray">
        <button aria-label="显示隐藏的图标">${I.trayUp}</button><button aria-label="助手">${I.tray1}</button><button aria-label="安全">${I.tray2}</button>
        <button aria-label="网络">${I.plane}</button><button aria-label="音量">${I.sound}</button><button class="zh">中</button>
        <button class="s" aria-label="输入法">${I.trayS}</button><button class="ball"><span>43</span></button>
        <button class="clock"><span>17:15</span><span>2018/1/7</span></button>
        <button class="note" aria-label="通知">${I.note}</button><button class="desk" aria-label="显示桌面"></button>
      </div>`;
  }
}

@customElement("app-root")
export class AppRoot extends LitElement {
  static styles = [base, css`
    :host { display: flex; flex-direction: column; height: 100vh; overflow: hidden; position: relative; font: 12px "Open Sans", "Noto Sans CJK SC", sans-serif; }
    .ime { position: absolute; right: 18px; bottom: 73px; display: flex; height: 24px; padding-left: 16px; background: #fdfdfd; border: 1px solid #d4dde4; border-radius: 3px; color: #2b6fa8; font-size: 15px; font-weight: 500; }
    .ime button { width: 22px; height: 22px; }
    .ime .logo { position: absolute; left: -15px; top: -3px; width: 30px; height: 28px; }
  `];
  render() {
    return html`
      <title-bar></title-bar>
      <ribbon-bar></ribbon-bar>
      <formula-bar></formula-bar>
      <sheet-grid></sheet-grid>
      <sheet-footer></sheet-footer>
      <task-bar></task-bar>
      <div class="ime">
        <button class="logo" aria-label="输入法菜单">${I.sogou}</button>
        <button>中</button><button aria-label="标点">${I.imeDot}</button><button aria-label="表情">${I.smile}</button><button aria-label="语音">${I.imeMic}</button>
        <button aria-label="软键盘">${I.kbd}</button><button aria-label="账户">${I.person}</button><button aria-label="皮肤">${I.shirt}</button><button aria-label="工具箱">${I.wrench}</button>
      </div>`;
  }
}
